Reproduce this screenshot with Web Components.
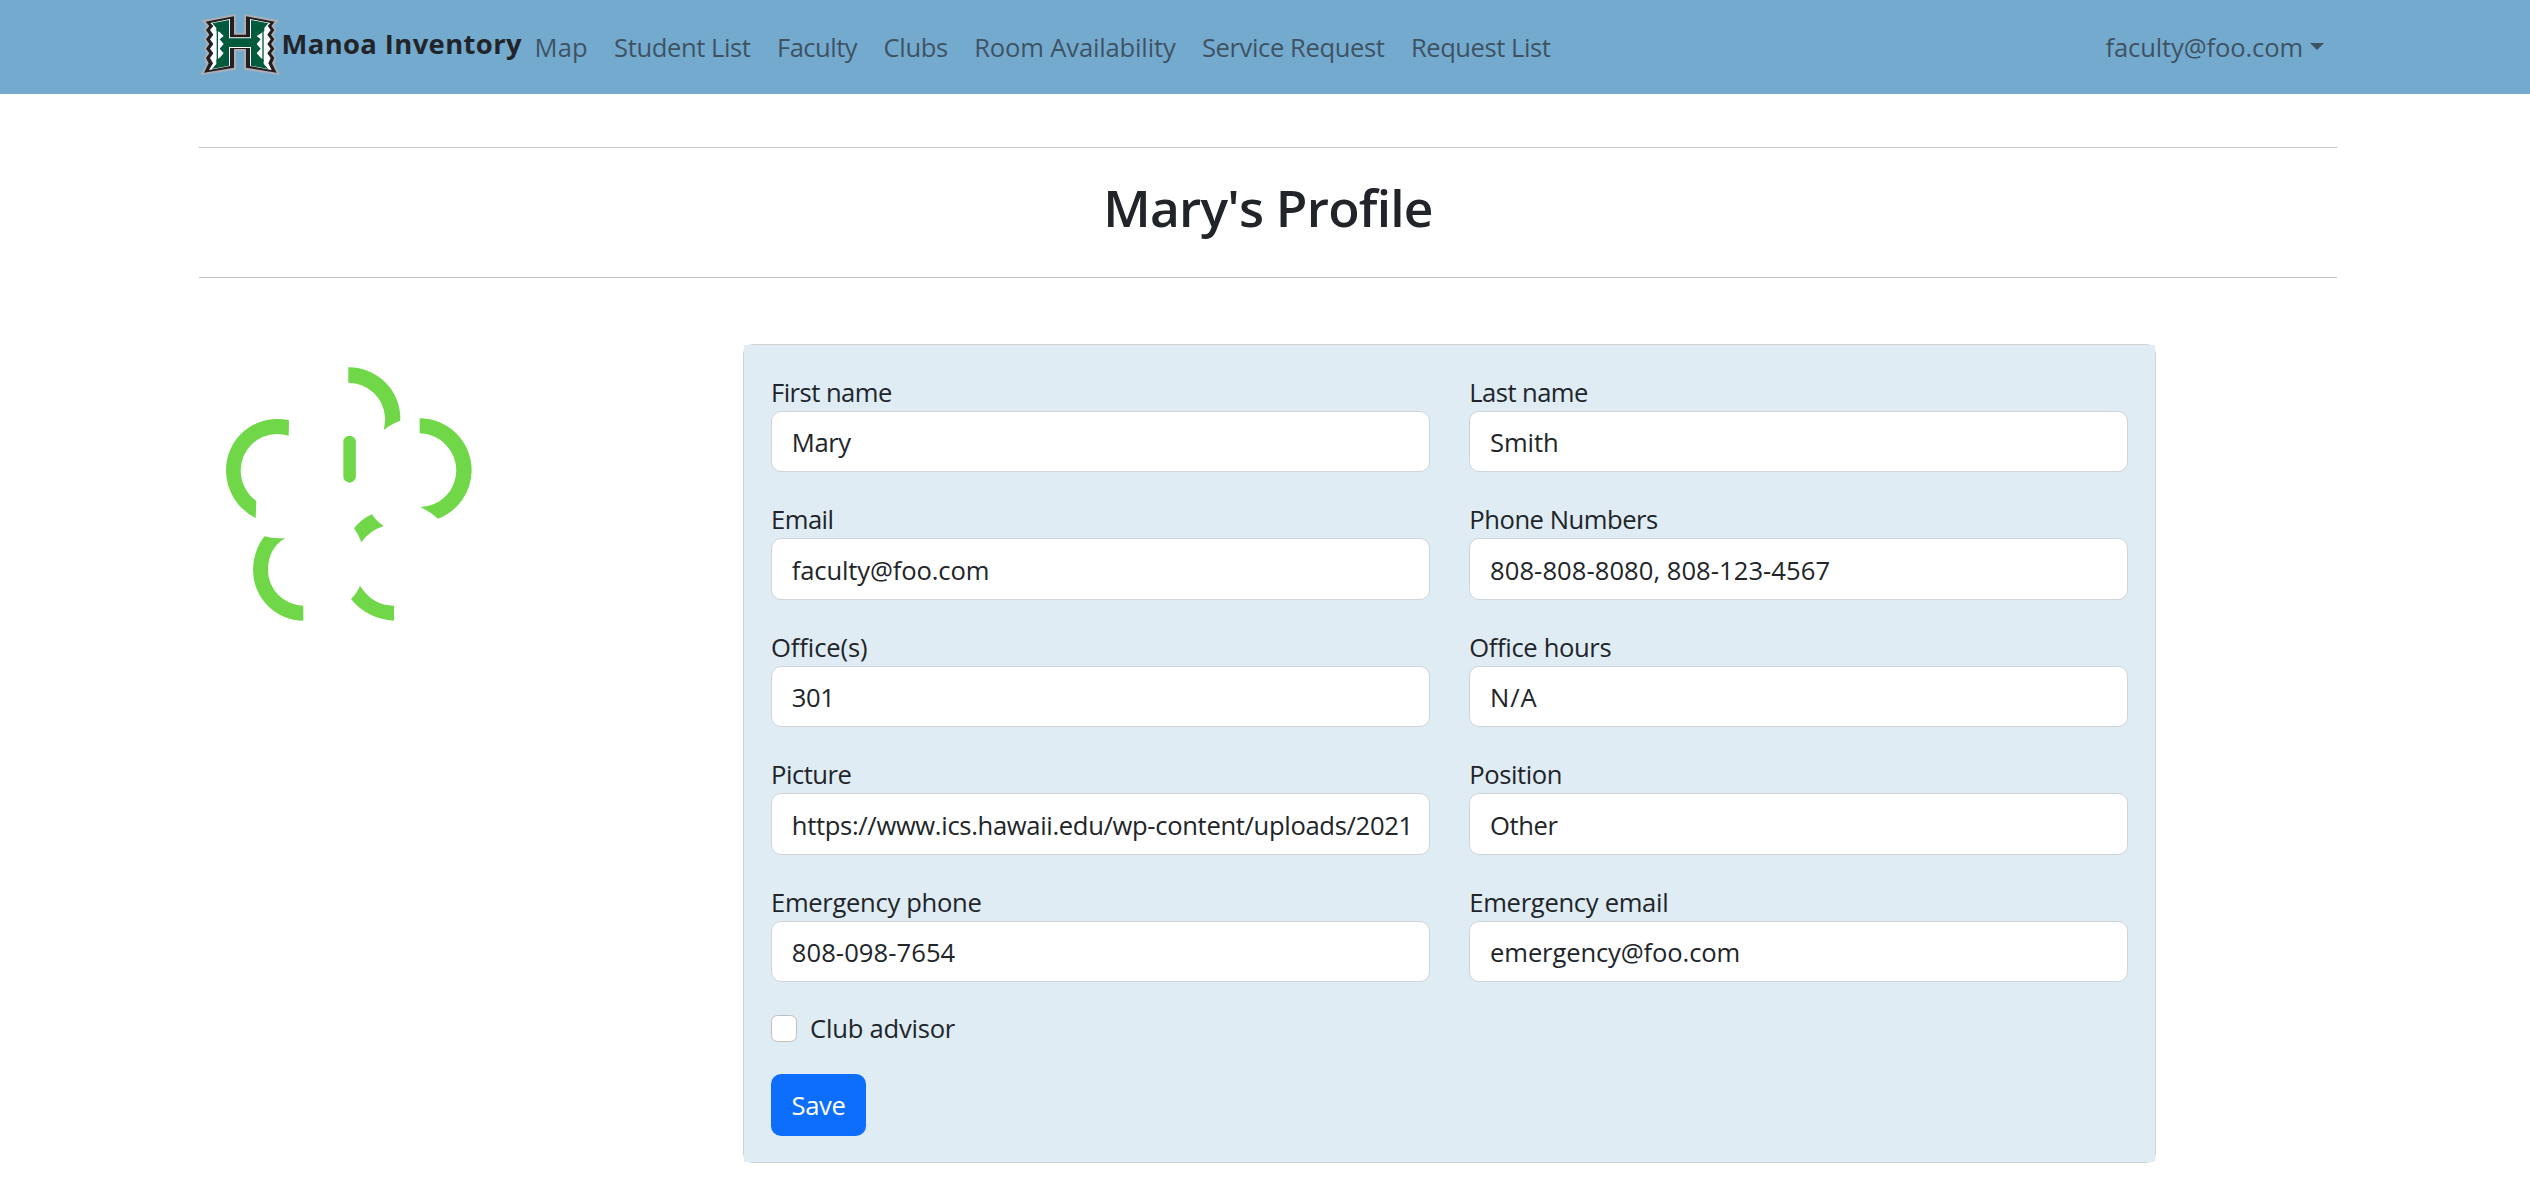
<!DOCTYPE html>
<html lang="en">
<head>
<meta charset="utf-8">
<title>Manoa Inventory</title>
<style>
  html, body { margin: 0; background: #fff; }
  body { font: 400 25.6px/39.6px "Open Sans", "Noto Sans", sans-serif; color: #212529; height: 1183px; overflow: hidden; }
</style>
</head>
<body>
<inventory-page></inventory-page>
<script>
const define = (name, html, setup) => {
  const template = document.createElement('template');
  template.innerHTML = html;
  customElements.define(name, class extends HTMLElement {
    constructor() {
      super();
      this.attachShadow({ mode: 'open' }).append(template.content.cloneNode(true));
    }
    connectedCallback() { if (setup) setup(this, this.shadowRoot); }
  });
};

// A run of text tracked so that it fills the advance width given in "w".
define('fit-text', `
  <style>
    :host { display: block; white-space: nowrap; }
    span { display: block; width: max-content; font-kerning: normal; font-variant-ligatures: none; }
  </style><span></span>`, (host, root) => {
  const span = root.querySelector('span');
  span.textContent = host.getAttribute('text');
  const target = parseFloat(host.getAttribute('w'));
  span.style.letterSpacing = '0';
  const gap = (target - span.getBoundingClientRect().width) / span.textContent.length;
  span.style.letterSpacing = gap.toFixed(3) + 'px';
  host.style.width = target + 'px';
});

define('h-logo', `
  <style>:host { display: block; width: 86px; height: 72px; } svg { display: block; }</style>
  <svg width="86" height="72" viewBox="0 0 258 216" aria-label="H logo">
    <path fill="#abafb5" d="M10 37 L114 18 V74 H138 V18 L243 37 L228 54 L235 66 L226 80 L235 94 L226 108 L235 122 L226 136 L235 150 L230 170 L247 201 L138 185 V130 H114 V185 L7 201 L25 170 L18 150 L27 136 L18 122 L27 108 L18 94 L27 80 L18 66 L25 54 Z"/>
    <path fill="#231f20" d="M23 41 L108 25 V80 H144 V25 L230 41 L220 54 L229 66 L219 80 L229 94 L219 108 L229 122 L219 136 L229 150 L222 166 L236 194 L144 179 V123 H108 V179 L18 194 L32 166 L24 150 L34 136 L24 122 L34 108 L24 94 L34 80 L24 66 L34 54 Z"/>
    <path fill="#fff" d="M37 45 L96 33 V88 H156 V33 L217 45 L209 54 L218 66 L208 80 L218 94 L208 108 L218 122 L208 136 L218 150 L211 166 L221 186 L156 174 V120 H96 V174 L33 186 L45 166 L36 150 L46 136 L36 122 L46 108 L36 94 L46 80 L36 66 L46 54 Z"/>
    <path fill="#005a3c" d="M43 46 L93 36 V91 H159 V36 L211 46 L199 60 V68 L186 78 L176 84 L188 94 L176 108 L188 122 L176 136 L188 149 L197 155 V168 L211 183 L159 173 V117 H93 V173 L42 183 L55 168 V155 L65 149 L77 136 L65 122 L77 108 L65 94 L77 84 L65 72 L55 68 V60 Z"/>
    <path stroke="#005a3c" stroke-width="4" d="M58 62V160M195 62V160"/>
  </svg>`);

define('profile-picture', `
  <style>:host { display: block; width: 300px; height: 290px; } svg { display: block; }</style>
  <svg width="300" height="290" viewBox="0 0 900 870" fill="#70d748">
    <path d="M445 52 A154 154 0 0 1 601 212 Q571 223 551 240 Q557 212 555 200 A110 110 0 0 0 445 98 Z"/>
    <path d="M267 211 Q250 207 231 207 A153.500 153.500 0 0 0 78 361 A160 160 0 0 0 167 504 L169 453 A112 112 0 0 1 122 361 A109 109 0 0 1 231 252 Q250 252 266 257 Z"/>
    <path d="M659 205 A156 156 0 0 1 815 361 A156 156 0 0 1 714 506 Q689 484 661 471 A110 110 0 0 0 769 361 A112 112 0 0 0 659 250 Z"/>
    <path d="M310 812 A152 152 0 0 1 159 660 Q159 605 193 559 Q222 567 256 564 Q204 595 204 660 A107 107 0 0 0 310 767 Z"/>
    <path d="M582 812 A172 172 0 0 1 453 747 Q469 732 480 707 Q517 766 582 767 Z"/>
    <path d="M516 493 Q484 507 462 535 Q475 552 484 577 Q508 542 551 528 Q529 514 516 493 Z"/>
    <rect x="430" y="257" width="37.500" height="141" rx="18.700"/>
  </svg>`);

define('nav-item', `
  <style>:host { display: block; color: rgba(33,37,41,.67); }</style>
  <slot></slot>`);

define('nav-bar', `
  <style>
    :host { display: flex; height: 94px; background: #75aacf; box-sizing: border-box; padding: 0 206px 0 198px; align-items: flex-start; }
    h-logo { margin-top: 8px; }
    .brand { font-weight: 700; font-size: 27.4px; margin: 24px 0 0 -2.5px; }
    nav { display: flex; gap: 26.4px; margin: 28px 0 0 12.600px; flex: 1; }
    .user { display: flex; margin-top: 28px; }
    .caret { border: 7px solid transparent; border-top-color: #3b5365; border-bottom: 0; height: 0; margin: 15px 0 0 7px; }
  </style>
  <h-logo></h-logo>
  <fit-text class="brand" text="Manoa Inventory" w="240.5"></fit-text>
  <nav>
    <nav-item><fit-text text="Map" w="53.1"></fit-text></nav-item>
    <nav-item><fit-text text="Student List" w="136.500"></fit-text></nav-item>
    <nav-item><fit-text text="Faculty" w="80.200"></fit-text></nav-item>
    <nav-item><fit-text text="Clubs" w="64.3"></fit-text></nav-item>
    <nav-item><fit-text text="Room Availability" w="201.300"></fit-text></nav-item>
    <nav-item><fit-text text="Service Request" w="182.6"></fit-text></nav-item>
    <nav-item><fit-text text="Request List" w="139.5"></fit-text></nav-item>
  </nav>
  <div class="user"><nav-item><fit-text text="faculty@foo.com" w="197.5"></fit-text></nav-item><span class="caret"></span></div>`);

define('page-title', `
  <style>
    :host { display: flex; justify-content: center; align-items: center; box-sizing: border-box; height: 131px; margin: 53px 193px 0 199px; border: solid #c7c8c9; border-width: 1px 0; }
    h1 { margin: 0 0 12px; font-size: 51.5px; line-height: 64px; font-weight: 600; }
  </style>
  <h1><fit-text text="Mary's Profile" w="329.5"></fit-text></h1>`);

define('form-field', `
  <style>
    :host { display: flex; flex-direction: column; height: 101.1px; }
    .box { box-sizing: border-box; height: 61.5px; background: #fff; border: 1px solid #ced4da; border-radius: 10px; padding: 11.200px 19.8px 0; }
    .label { height: 39.6px; box-sizing: border-box; padding-top: 1.6px; }
  </style>
  <div class="label"><slot name="label"></slot></div>
  <div class="box" role="textbox"><slot></slot></div>`);

define('check-field', `
  <style>
    :host { display: flex; height: 39.6px; }
    .check { box-sizing: border-box; width: 26.4px; height: 26.4px; margin: 6.400px 12.7px 0 0; background: #fff; border: 1px solid #bfbfbf; border-radius: 6.6px; }
  </style>
  <span class="check" role="checkbox" aria-checked="false"></span><slot></slot>`);

define('save-button', `
  <style>
    :host { display: block; box-sizing: border-box; width: 95px; height: 62px; padding: 12px 20.5px; border-radius: 10px; background: #0d6efd; color: #fff; }
  </style><slot></slot>`);

const fields = [
  ['First name', 120.8, 'Mary', 59],
  ['Last name', 118.500, 'Smith', 68.5],
  ['Email', 62.5, 'faculty@foo.com', 197.5],
  ['Phone Numbers', 188.5, '808-808-8080, 808-123-4567', 340],
  ['Office(s)', 96.5, '301', 42.7],
  ['Office hours', 142, 'N/A', 47.5],
  ['Picture', 80.5, 'https://www.ics.hawaii.edu/wp-content/uploads/2021', 621],
  ['Position', 92.800, 'Other', 67.5],
  ['Emergency phone', 210.5, '808-098-7654', 163.5],
  ['Emergency email', 199, 'emergency@foo.com', 250],
];

define('profile-form', `
  <style>
    :host { display: block; box-sizing: border-box; width: 1413px; height: 819px; border: 1px solid #cfd1d3; border-radius: 10px; }
    .body { box-sizing: border-box; height: 817px; background: #dfecf4; padding: 26.4px 27px 0; }
    .grid { display: grid; grid-template-columns: repeat(2, minmax(0, 1fr)); gap: 26.4px 39.6px; }
    check-field { margin: 26.4px 0 0; }
    save-button { margin-top: 25.8px; }
  </style>
  <div class="body">
    <div class="grid">${fields.map(([l, lw, v, vw]) =>
      `<form-field><fit-text slot="label" text="${l}" w="${lw}"></fit-text><fit-text text="${v}" w="${vw}"></fit-text></form-field>`).join('')}</div>
    <check-field><fit-text text="Club advisor" w="145"></fit-text></check-field>
    <save-button><fit-text text="Save" w="54"></fit-text></save-button>
  </div>`);

define('inventory-page', `
  <style>
    :host { display: block; }
    main { display: flex; padding: 66px 0 0 200px; gap: 243px; align-items: flex-start; }
    profile-picture { margin-top: 6px; }
  </style>
  <nav-bar></nav-bar>
  <page-title></page-title>
  <main><profile-picture></profile-picture><profile-form></profile-form></main>`);
</script>
</body>
</html>
